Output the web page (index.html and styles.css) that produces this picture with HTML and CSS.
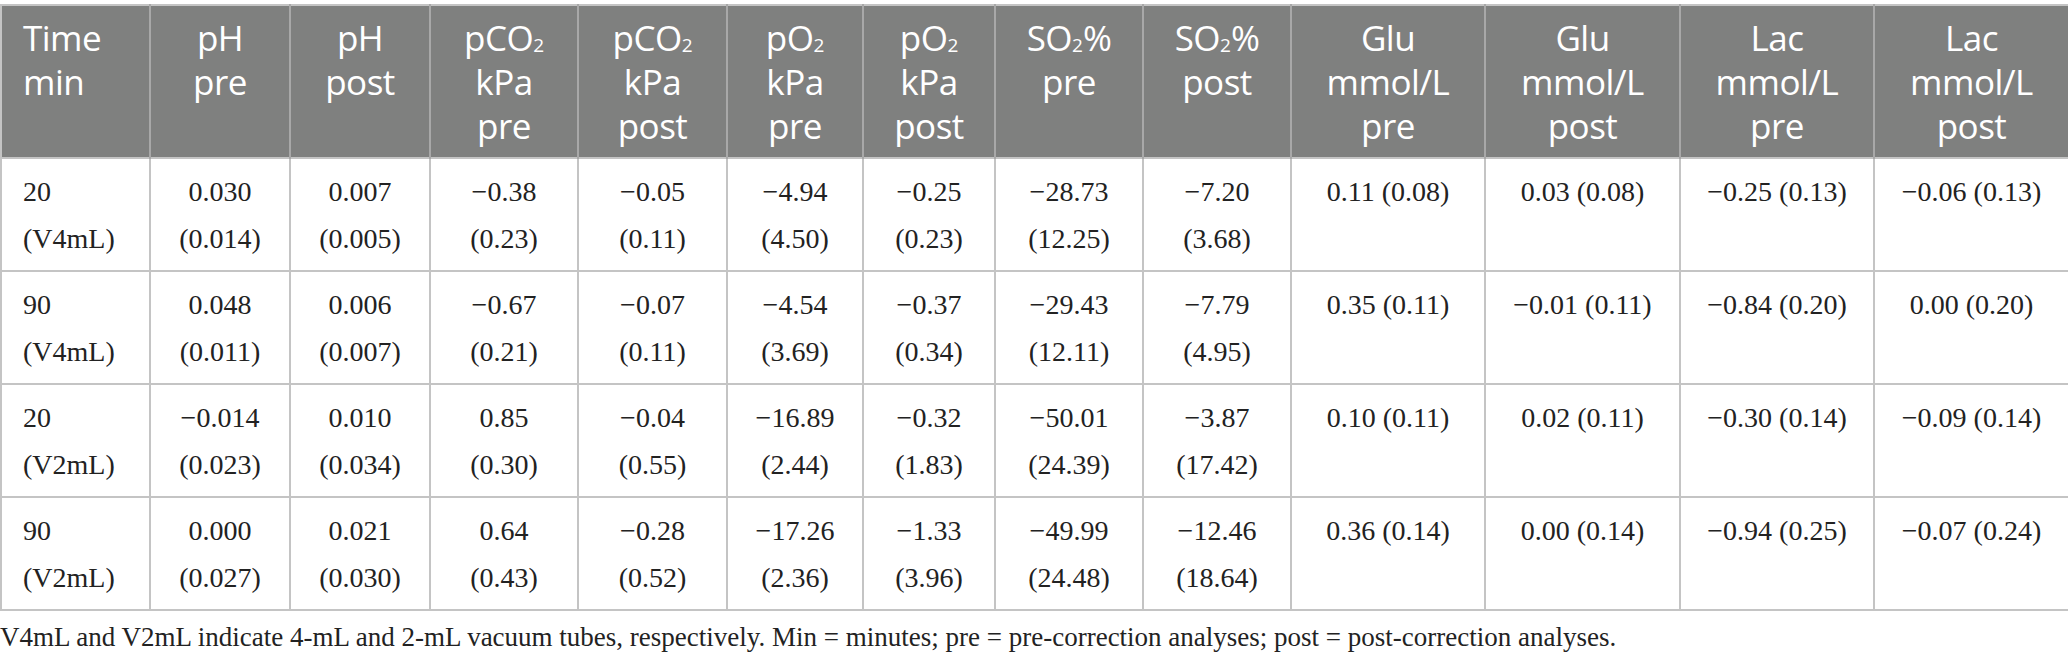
FILE: index.html
```html
<!DOCTYPE html>
<html>
<head>
<meta charset="utf-8">
<link rel="stylesheet" href="styles.css">
</head>
<body>
<div class="wrap">
<table class="data">
<colgroup>
<col class="c-time"><col class="c-ph"><col class="c-ph"><col class="c-pco2"><col class="c-pco2b"><col class="c-po2"><col class="c-po2b"><col class="c-so2"><col class="c-so2"><col class="c-glu"><col class="c-glu2"><col class="c-glu"><col class="c-glu2">
</colgroup>
<thead>
<tr>
<th class="left">Time<br>min</th>
<th>pH<br>pre</th>
<th>pH<br>post</th>
<th>pCO<sub>2</sub><br>kPa<br>pre</th>
<th>pCO<sub>2</sub><br>kPa<br>post</th>
<th>pO<sub>2</sub><br>kPa<br>pre</th>
<th>pO<sub>2</sub><br>kPa<br>post</th>
<th>SO<sub>2</sub>%<br>pre</th>
<th>SO<sub>2</sub>%<br>post</th>
<th>Glu<br>mmol/L<br>pre</th>
<th>Glu<br>mmol/L<br>post</th>
<th>Lac<br>mmol/L<br>pre</th>
<th>Lac<br>mmol/L<br>post</th>
</tr>
</thead>
<tbody>
<tr>
<td class="left">20<br>(V4mL)</td>
<td>0.030<br>(0.014)</td>
<td>0.007<br>(0.005)</td>
<td>&minus;0.38<br>(0.23)</td>
<td>&minus;0.05<br>(0.11)</td>
<td>&minus;4.94<br>(4.50)</td>
<td>&minus;0.25<br>(0.23)</td>
<td>&minus;28.73<br>(12.25)</td>
<td>&minus;7.20<br>(3.68)</td>
<td>0.11 (0.08)</td>
<td>0.03 (0.08)</td>
<td>&minus;0.25 (0.13)</td>
<td>&minus;0.06 (0.13)</td>
</tr>
<tr>
<td class="left">90<br>(V4mL)</td>
<td>0.048<br>(0.011)</td>
<td>0.006<br>(0.007)</td>
<td>&minus;0.67<br>(0.21)</td>
<td>&minus;0.07<br>(0.11)</td>
<td>&minus;4.54<br>(3.69)</td>
<td>&minus;0.37<br>(0.34)</td>
<td>&minus;29.43<br>(12.11)</td>
<td>&minus;7.79<br>(4.95)</td>
<td>0.35 (0.11)</td>
<td>&minus;0.01 (0.11)</td>
<td>&minus;0.84 (0.20)</td>
<td>0.00 (0.20)</td>
</tr>
<tr>
<td class="left">20<br>(V2mL)</td>
<td>&minus;0.014<br>(0.023)</td>
<td>0.010<br>(0.034)</td>
<td>0.85<br>(0.30)</td>
<td>&minus;0.04<br>(0.55)</td>
<td>&minus;16.89<br>(2.44)</td>
<td>&minus;0.32<br>(1.83)</td>
<td>&minus;50.01<br>(24.39)</td>
<td>&minus;3.87<br>(17.42)</td>
<td>0.10 (0.11)</td>
<td>0.02 (0.11)</td>
<td>&minus;0.30 (0.14)</td>
<td>&minus;0.09 (0.14)</td>
</tr>
<tr>
<td class="left">90<br>(V2mL)</td>
<td>0.000<br>(0.027)</td>
<td>0.021<br>(0.030)</td>
<td>0.64<br>(0.43)</td>
<td>&minus;0.28<br>(0.52)</td>
<td>&minus;17.26<br>(2.36)</td>
<td>&minus;1.33<br>(3.96)</td>
<td>&minus;49.99<br>(24.48)</td>
<td>&minus;12.46<br>(18.64)</td>
<td>0.36 (0.14)</td>
<td>0.00 (0.14)</td>
<td>&minus;0.94 (0.25)</td>
<td>&minus;0.07 (0.24)</td>
</tr>
</tbody>
</table>
<p class="note">V4mL and V2mL indicate 4-mL and 2-mL vacuum tubes, respectively. Min = minutes; pre = pre-correction analyses; post = post-correction analyses.</p>
</div>
</body>
</html>
```

FILE: styles.css
```css
html, body {
  margin: 0;
  padding: 0;
  background: #ffffff;
}

.wrap {
  padding-top: 4px;
  width: 2068px;
}

.data {
  width: 2068px;
  table-layout: fixed;
  border-collapse: collapse;
  border: 2px solid #c4c4c4;
}

.c-time { width: 149px; }
.c-ph { width: 140px; }
.c-pco2 { width: 148px; }
.c-pco2b { width: 149px; }
.c-po2 { width: 136px; }
.c-po2b { width: 132px; }
.c-so2 { width: 148px; }
.c-glu { width: 194px; }
.c-glu2 { width: 195px; }

.data th {
  background: #7f807f;
  color: #ffffff;
  font-family: "Open Sans", "Noto Sans", sans-serif;
  font-weight: 400;
  font-size: 35px;
  line-height: 44px;
  text-align: center;
  vertical-align: top;
  padding: 10px 6px 9px;
  border-left: 2px solid #a8a8a8;
  height: 132px;
  letter-spacing: -0.5px;
}

.data th:first-child {
  border-left: 2px solid #c4c4c4;
}

.data th sub {
  font-size: 19px;
  vertical-align: -1px;
  line-height: 0;
  letter-spacing: 0;
}

.data td {
  font-family: "Liberation Serif", "Times New Roman", serif;
  font-size: 28px;
  line-height: 47px;
  color: #222222;
  text-align: center;
  vertical-align: top;
  padding: 9px 6px 8px;
  border: 2px solid #c4c4c4;
  height: 93px;
}

.data .left {
  text-align: left;
  padding-left: 21px;
}

.note {
  margin: 10px 0 0 0;
  font-family: "Liberation Serif", "Times New Roman", serif;
  font-size: 27px;
  line-height: 32px;
  color: #222222;
}
```
